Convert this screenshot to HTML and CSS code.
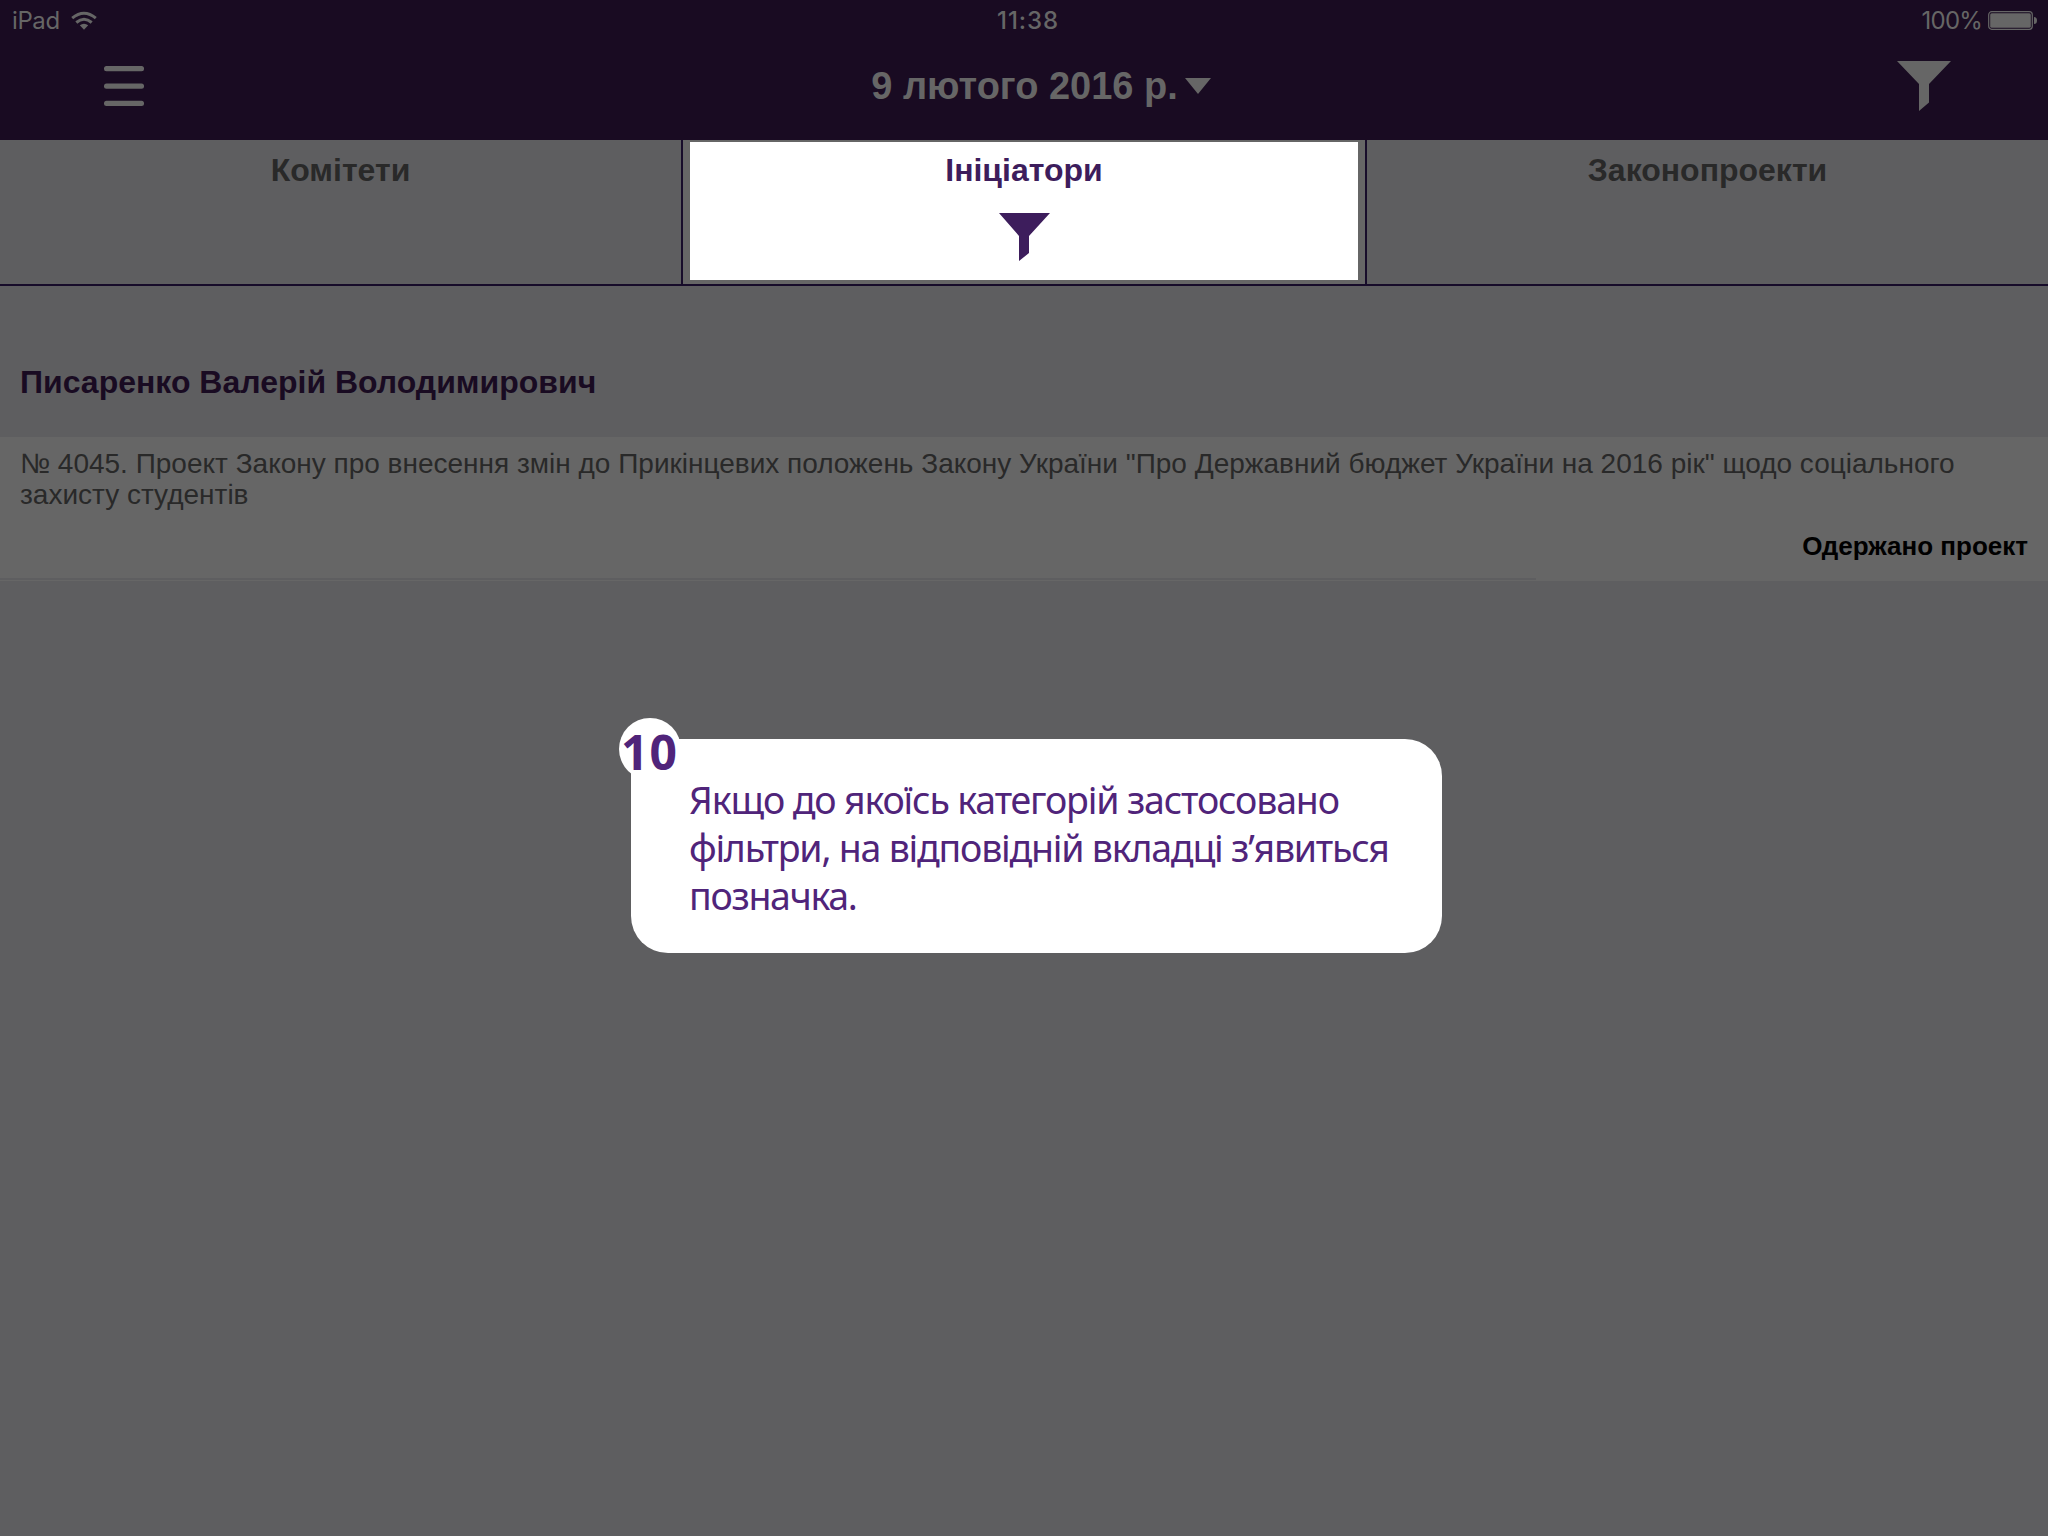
FILE: index.html
```html
<!DOCTYPE html>
<html lang="uk">
<head>
<meta charset="utf-8">
<title>Порядок денний</title>
<link rel="stylesheet" href="styles.css">
</head>
<body>
<header class="header">
  <div class="status-bar">
    <div class="status-left">
      <span class="device">iPad</span>
      <svg class="wifi" viewBox="0 0 26 19" width="26" height="19"><g fill="none" stroke="#666" stroke-width="3"><path d="M1.200 7.200Q13 -2.800 24.800 7.200"/><path d="M5.300 11.500Q13 5 20.700 11.500"/></g><path d="M8.800 14.300Q13 11 17.200 14.300L13 18.800Z" fill="#666"/></svg>
    </div>
    <span class="clock">11:38</span>
    <div class="status-right">
      <span class="charge">100%</span>
      <svg class="battery" viewBox="0 0 50 19" width="50" height="19"><rect x=".7" y=".7" width="43.600" height="17.600" rx="3" fill="none" stroke="#666" stroke-width="1.200"/><rect x="2.200" y="2.200" width="40.600" height="14.600" rx="1.500" fill="#666"/><path d="M46 6Q49 6 49 9.500T46 13Z" fill="#666"/></svg>
    </div>
  </div>
  <div class="nav-bar">
    <svg class="menu" viewBox="0 0 40 40" width="40" height="40"><g fill="#666"><rect y="0" width="40" height="5.200" rx="2.500"/><rect y="17.400" width="40" height="5.400" rx="2.500"/><rect y="34.800" width="40" height="5.200" rx="2.500"/></g></svg>
    <div class="date"><span>9 лютого 2016 р.</span><svg class="caret" viewBox="0 0 26 16" width="26" height="16"><path d="M0 0H26L13 16Z" fill="#666"/></svg></div>
    <svg class="filter" viewBox="0 0 54 50" width="54" height="50"><path d="M0 0H54L32 23V41.500L22 50V23Z" fill="#666"/></svg>
  </div>
</header>
<nav class="tabs">
  <div class="tab">Комітети</div>
  <div class="tab tab-active">
    <div class="tab-focus">
      <span>Ініціатори</span>
      <svg viewBox="0 0 51 48" width="51" height="48"><path d="M0 0H51L30 23V40L20 48V23Z" fill="#3d1d5c"/></svg>
    </div>
  </div>
  <div class="tab">Законопроекти</div>
</nav>
<main>
  <h2 class="initiator">Писаренко Валерій Володимирович</h2>
  <article class="bill">
    <p class="bill-title">№ 4045. Проект Закону про внесення змін до Прикінцевих положень Закону України "Про Державний бюджет України на 2016 рік" щодо соціального<br>захисту студентів</p>
    <p class="bill-state">Одержано проект</p>
    <div class="bill-rule"></div>
  </article>
</main>
<aside class="callout">
  <div class="step">10</div>
  <p class="callout-text"><span class="line-1">Якщо до якоїсь категорій застосовано</span><br><span class="line-2">фільтри, на відповідній вкладці з’явиться</span><br><span class="line-3">позначка.</span></p>
</aside>
</body>
</html>
```
FILE: styles.css
```css
* { box-sizing: border-box; }
body {
  margin: 0;
  width: 2048px;
  height: 1536px;
  overflow: hidden;
  background: #5e5e60;
  font-family: "Liberation Sans", Arial, sans-serif;
  position: relative;
}
p, h2 { margin: 0; }
svg { display: block; flex: none; }
.header { height: 140px; background: #190b22; color: #666; }
.status-bar {
  display: grid;
  grid-template-columns: 1fr auto 1fr;
  height: 40px;
  padding: 0 10px 0 12px;
  font: 24px/42px Inter, sans-serif;
}
.status-left, .status-right { display: flex; align-items: center; }
.status-left { gap: 11px; }
.status-right { justify-content: flex-end; gap: 6px; }
.wifi, .battery { margin-bottom: 1px; }
.device { letter-spacing: -0.4px; }
.clock { margin-left: 6px; font-weight: 500; letter-spacing: 0.9px; }
.charge { letter-spacing: -0.8px; }
.nav-bar {
  display: grid;
  grid-template-columns: 1fr auto 1fr;
  align-items: center;
  height: 92px;
  padding: 0 97px 0 104px;
}
.date {
  display: flex;
  align-items: center;
  gap: 7px;
  margin-left: 27px;
  font-size: 38px;
  font-weight: 700;
  line-height: 92px;
}
.filter { justify-self: end; }
.tabs {
  display: grid;
  grid-template-columns: 681px 686px 681px;
  height: 146px;
  border-bottom: 2px solid #170c2a;
  font-size: 32px;
  font-weight: 700;
  line-height: 40px;
}
.tab { padding-top: 10px; text-align: center; color: #292929; }
.tab-active {
  padding: 2px 7px 4px;
  background: #666;
  border: solid #170c2a;
  border-width: 0 2px;
}
.tab-focus {
  display: flex;
  flex-direction: column;
  align-items: center;
  gap: 23px;
  height: 138px;
  padding-top: 8px;
  background: #fff;
  color: #3d1d5c;
}
.initiator {
  height: 151px;
  padding: 76px 20px 0;
  color: #190b22;
  font-size: 32px;
  line-height: 40px;
}
.bill { position: relative; height: 144px; padding: 11px 20px 0; background: #666; }
.bill-title { color: #292929; font-size: 28px; line-height: 31px; white-space: nowrap; }
.bill-state {
  margin-top: 20px;
  color: #000;
  font-size: 26px;
  font-weight: 700;
  line-height: 32px;
  text-align: right;
}
.bill-rule {
  position: absolute;
  left: 0;
  bottom: 1px;
  width: 1536px;
  height: 2px;
  background: #5e5e60;
}
.callout {
  position: absolute;
  left: 630.5px;
  top: 739px;
  width: 811px;
  height: 214px;
  padding: 37px 0 0 58.5px;
  border-radius: 0 37px 37px 37px;
  background: #fff;
  color: #50247a;
  font-family: "Noto Sans", sans-serif;
}
.step {
  position: absolute;
  left: -11.5px;
  top: -21px;
  width: 62px;
  height: 62px;
  border-radius: 50%;
  background: #fff;
  font-size: 48px;
  font-weight: 700;
  line-height: 67px;
  letter-spacing: 1px;
  text-indent: -1px;
  text-align: center;
}
.callout-text { font-size: 37.5px; line-height: 48px; white-space: nowrap; }
.line-1 { letter-spacing: -1.16px; }
.line-2 { letter-spacing: -1.23px; }
.line-3 { letter-spacing: -1.3px; }
```
